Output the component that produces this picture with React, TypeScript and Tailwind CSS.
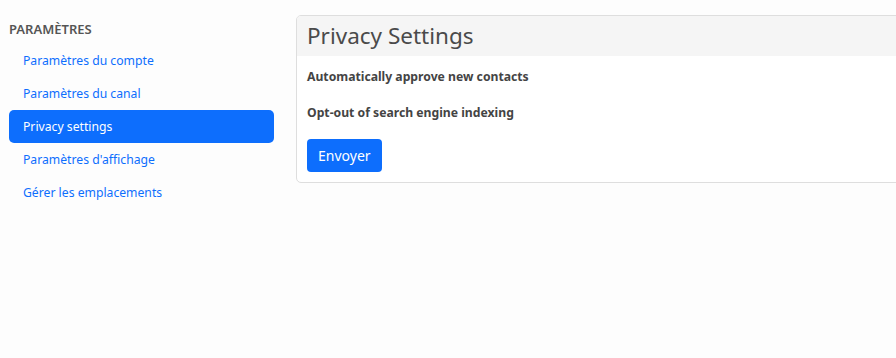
import React from "react";

const links = [
  "Paramètres du compte",
  "Paramètres du canal",
  "Privacy settings",
  "Paramètres d'affichage",
  "Gérer les emplacements",
];

export default function App() {
  const active = "Privacy settings";

  return (
    <div
      className="flex h-[358px] w-[896px] overflow-hidden bg-[#fdfdfd] text-[12.2px] text-[#444]"
      style={{ fontFamily: '"Noto Sans", "Open Sans", sans-serif' }}
    >
      <aside className="ml-[9px] w-[265px] shrink-0">
        <h3 className="mb-[5px] mt-[19px] h-5 text-[13px] font-semibold uppercase leading-5 text-[#555]">
          Paramètres
        </h3>
        <ul className="flex flex-col">
          {links.map((label) => (
            <li key={label}>
              <a
                href="#"
                className={
                  label === active
                    ? "block h-[33px] rounded-[5px] bg-[#0d6efd] px-[14px] leading-[33px] text-white"
                    : "block h-[33px] px-[14px] leading-[33px] text-[#0d6efd]"
                }
              >
                {label}
              </a>
            </li>
          ))}
        </ul>
      </aside>

      <main className="ml-[22px] mt-[15px] shrink-0">
        <div className="w-[640px] overflow-hidden rounded-[5px] border border-[#dedede] bg-white">
          <div className="h-10 bg-[#f5f5f5] px-[10px] text-[22.5px] leading-10 text-[#4a4a4a]">
            Privacy Settings
          </div>
          <div className="px-[10px] pb-[10px]">
            <div className="mt-[11px] h-5 font-bold leading-5">
              Automatically approve new contacts
            </div>
            <div className="mt-4 h-5 font-bold leading-5">
              Opt-out of search engine indexing
            </div>
            <button className="mt-4 h-[33px] rounded-[4px] bg-[#0d6efd] px-[11px] text-[14px] text-white">
              Envoyer
            </button>
          </div>
        </div>
      </main>
    </div>
  );
}
